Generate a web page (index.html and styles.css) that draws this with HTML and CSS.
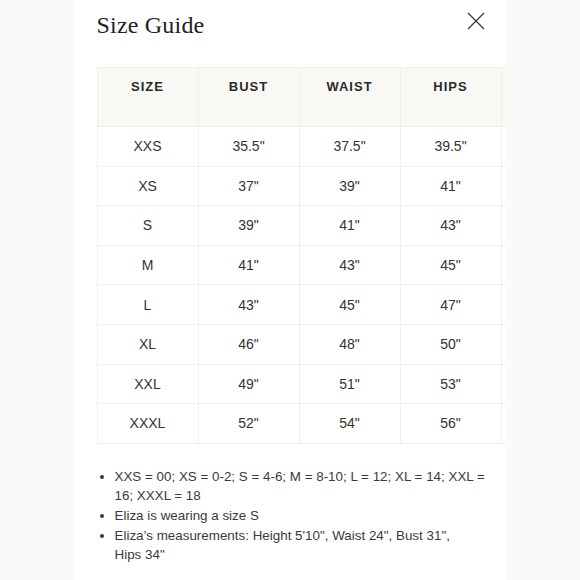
FILE: index.html
```html
<!DOCTYPE html>
<html lang="en">
<head>
<meta charset="utf-8">
<title>Size Guide</title>
<link rel="stylesheet" href="styles.css">
</head>
<body>
<div class="panel">
  <div class="head">
    <h1 class="title">Size Guide</h1>
    <button class="close" aria-label="Close">
      <svg width="18" height="18" viewBox="0 0 18 18"><path d="M1 1 L17 17 M17 1 L1 17" stroke="#3a3a3a" stroke-width="1.3" fill="none"/></svg>
    </button>
  </div>
  <table class="sizes">
    <thead>
      <tr><th>SIZE</th><th>BUST</th><th>WAIST</th><th>HIPS</th><th></th></tr>
    </thead>
    <tbody>
      <tr><td>XXS</td><td>35.5"</td><td>37.5"</td><td>39.5"</td><td></td></tr>
      <tr><td>XS</td><td>37"</td><td>39"</td><td>41"</td><td></td></tr>
      <tr><td>S</td><td>39"</td><td>41"</td><td>43"</td><td></td></tr>
      <tr><td>M</td><td>41"</td><td>43"</td><td>45"</td><td></td></tr>
      <tr><td>L</td><td>43"</td><td>45"</td><td>47"</td><td></td></tr>
      <tr><td>XL</td><td>46"</td><td>48"</td><td>50"</td><td></td></tr>
      <tr><td>XXL</td><td>49"</td><td>51"</td><td>53"</td><td></td></tr>
      <tr><td>XXXL</td><td>52"</td><td>54"</td><td>56"</td><td></td></tr>
    </tbody>
  </table>
  <ul class="notes">
    <li>XXS = 00; XS = 0-2; S = 4-6; M = 8-10; L = 12; XL = 14; XXL = 16; XXXL = 18</li>
    <li>Eliza is wearing a size S</li>
    <li>Eliza’s measurements: Height 5'10", Waist 24", Bust 31",<br>Hips 34"</li>
  </ul>
</div>
</body>
</html>
```
FILE: styles.css
```css
html, body {
  margin: 0;
  padding: 0;
}
body {
  background: #fbfaf8;
  font-family: "Liberation Sans", Arial, sans-serif;
  color: #333;
}
.panel {
  width: 431px;
  height: 580px;
  margin: 0 auto;
  background: #fff;
  padding-left: 22px;
  box-sizing: border-box;
  overflow: hidden;
}
.head {
  display: flex;
  justify-content: space-between;
  align-items: flex-start;
  padding: 10px 21px 0 0;
}
.title {
  margin: 0;
  font-family: "Liberation Serif", "Times New Roman", serif;
  font-weight: normal;
  font-size: 24px;
  line-height: 30px;
  color: #222;
  letter-spacing: 0.2px;
}
.close {
  border: 0;
  background: none;
  padding: 0;
  margin-top: 2px;
  width: 18px;
  height: 18px;
  display: block;
}
.close svg {
  display: block;
}
.sizes {
  margin-top: 27px;
  border-collapse: collapse;
  table-layout: fixed;
  width: 505px;
}
.sizes th,
.sizes td {
  width: 101px;
  border: 1px solid #f1efea;
  text-align: center;
  padding: 0;
}
.sizes th {
  background: #f9f8f5;
  height: 59px;
  vertical-align: top;
  padding-top: 11px;
  box-sizing: border-box;
  font-size: 13px;
  font-weight: bold;
  letter-spacing: 1px;
  color: #2a2a2a;
  line-height: 16px;
}
.sizes td {
  height: 38.6px;
  font-size: 14px;
  color: #333;
}
.notes {
  margin: 23px 0 0 0;
  padding-left: 18px;
  width: 374px;
  font-size: 13.4px;
  line-height: 19.6px;
  color: #3a3a3a;
}
```
